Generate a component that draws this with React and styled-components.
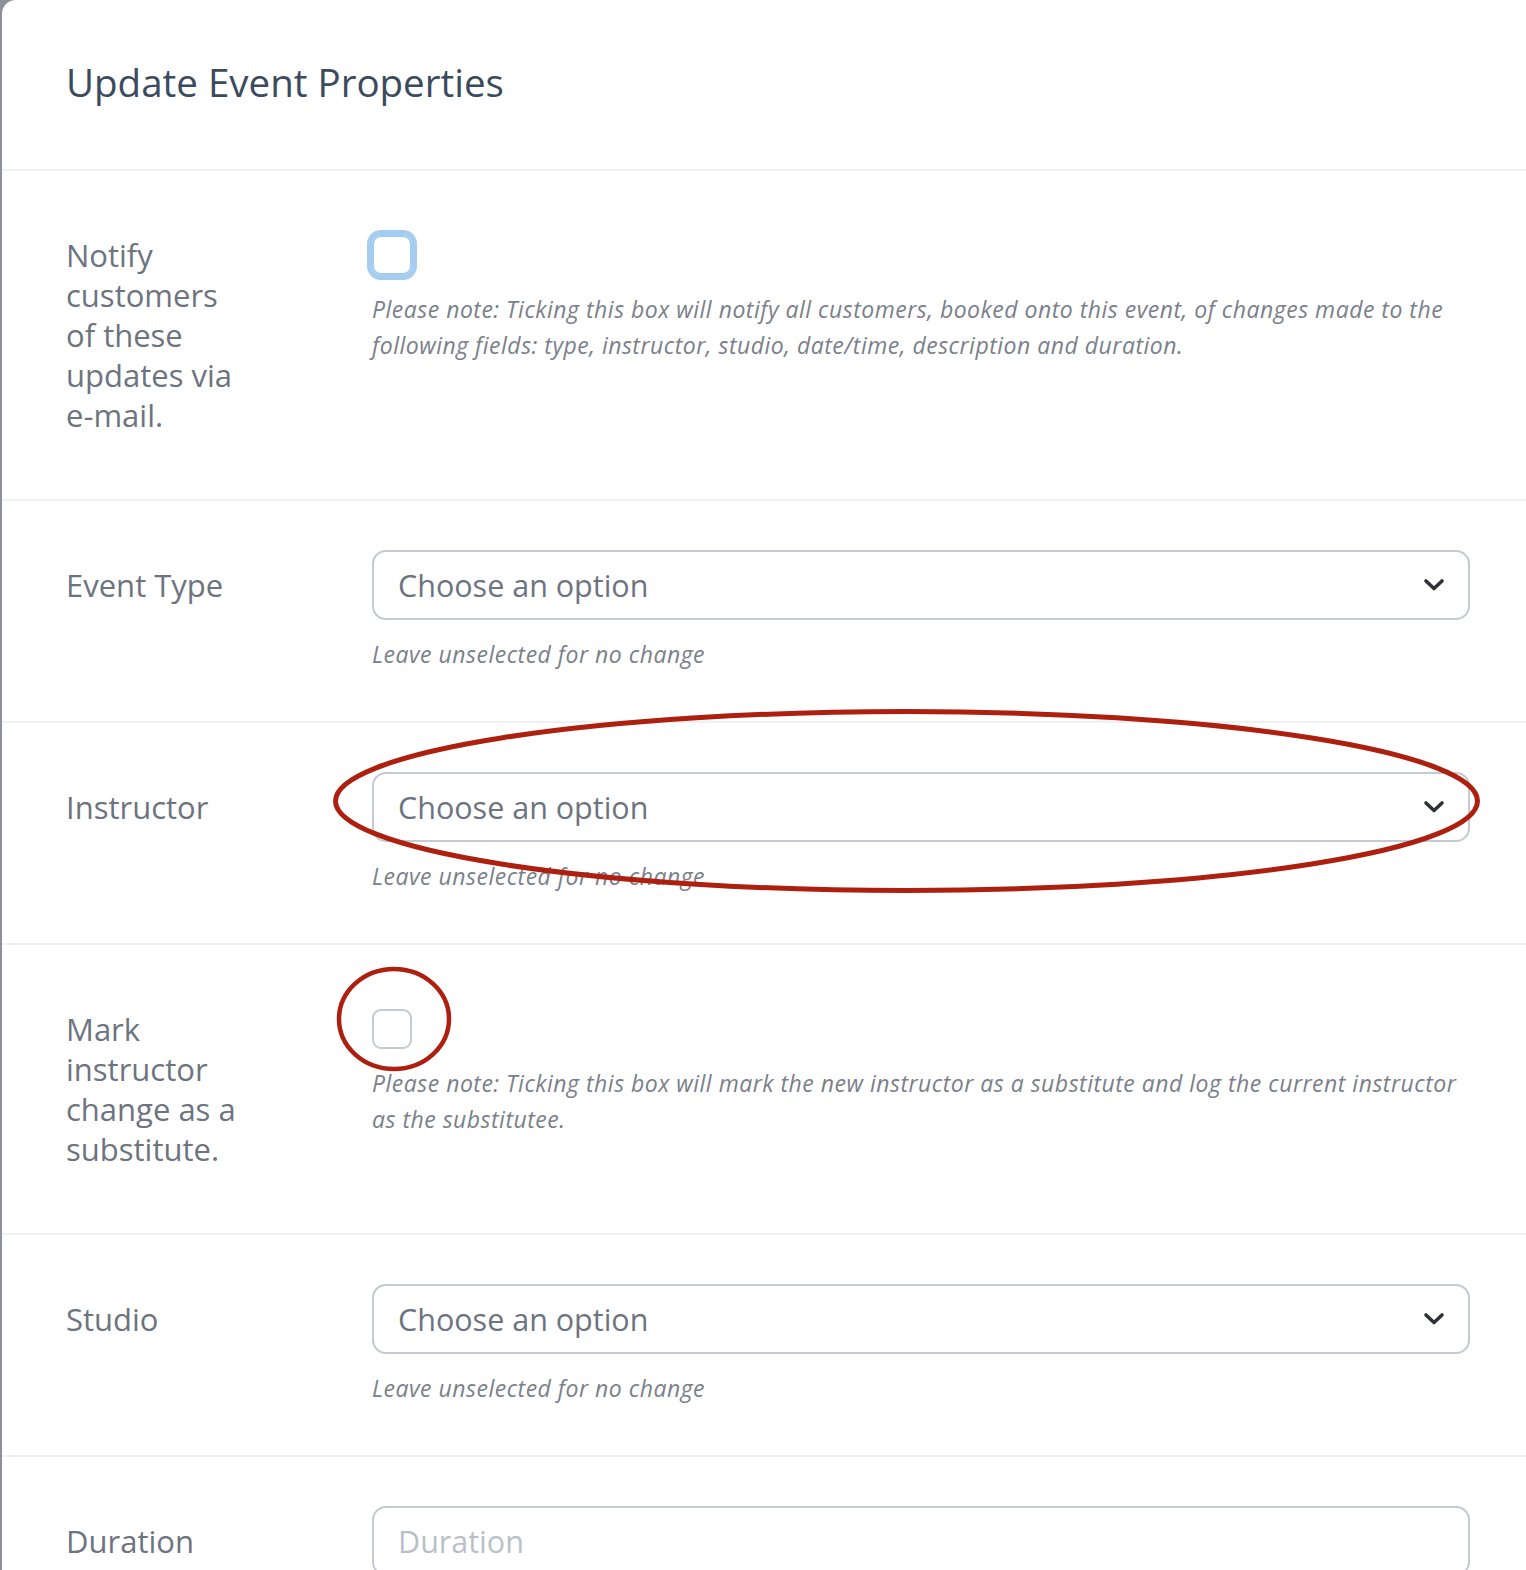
import React from "react";
import styled, { createGlobalStyle } from "styled-components";

const GlobalStyle = createGlobalStyle`
  html, body {
    margin: 0;
    padding: 0;
    background: #8f9199;
  }
  * {
    box-sizing: border-box;
  }
`;

const FONT = `"Open Sans", "Noto Sans", sans-serif`;

const Modal = styled.div`
  position: relative;
  margin-left: 2px;
  min-height: 100vh;
  background: #ffffff;
  border-top-left-radius: 14px;
  overflow: hidden;
  font-family: ${FONT};
`;

const Header = styled.div`
  display: flex;
  align-items: center;
  height: 171px;
  padding: 0 64px 6px;
  border-bottom: 2px solid #eff1f3;
`;

const Title = styled.h1`
  margin: 0;
  font-size: 38.5px;
  font-weight: 400;
  color: #3c4a5e;
`;

const Row = styled.div`
  display: grid;
  grid-template-columns: 306px 1fr;
  padding: 49px 56px 49px 64px;
  border-bottom: 2px solid #eff1f3;
`;

const Label = styled.div`
  max-width: 178px;
  padding: 15px 0;
  font-size: 31px;
  line-height: 40px;
  color: #6d7480;
`;

const Control = styled.div`
  display: flex;
  flex-direction: column;
  align-items: flex-start;
`;

const Checkbox = styled.div`
  width: 40px;
  height: 40px;
  margin-top: 15px;
  border-radius: 9px;
  border: 2px solid ${(p) => (p.$focused ? "#a3cbee" : "#c3cad3")};
  box-shadow: ${(p) => (p.$focused ? "0 0 0 5px #a6cdef" : "none")};
`;

const Help = styled.p`
  margin: 16px 0 0;
  font-size: 23px;
  line-height: 36px;
  letter-spacing: 0.5px;
  font-style: italic;
  color: #7a808a;
`;

const Select = styled.div`
  display: flex;
  align-items: center;
  justify-content: space-between;
  width: 100%;
  height: 70px;
  padding: 0 23px 0 24px;
  border: 2px solid #c3cad3;
  border-radius: 14px;
  font-size: 30.5px;
  color: ${(p) => (p.$placeholder ? "#b9bfc7" : "#6d7480")};
`;

const Overlay = styled.svg`
  position: absolute;
  left: 0;
  top: 0;
  pointer-events: none;
`;

const Chevron = () => (
  <svg width="22" height="14" viewBox="0 0 22 14">
    <path
      d="M3 3 L11 10.5 L19 3"
      fill="none"
      stroke="#2f3237"
      strokeWidth="3.6"
      strokeLinecap="round"
      strokeLinejoin="round"
    />
  </svg>
);

const SelectRow = ({ label }) => (
  <Row>
    <Label>{label}</Label>
    <Control>
      <Select>
        Choose an option
        <Chevron />
      </Select>
      <Help>Leave unselected for no change</Help>
    </Control>
  </Row>
);

const App = () => (
  <>
    <GlobalStyle />
    <Modal>
      <Header>
        <Title>Update Event Properties</Title>
      </Header>

      <Row>
        <Label>Notify customers of these updates via e-mail.</Label>
        <Control>
          <Checkbox $focused />
          <Help>
            Please note: Ticking this box will notify all customers, booked
            onto this event, of changes made to the following fields: type,
            instructor, studio, date/time, description and duration.
          </Help>
        </Control>
      </Row>

      <SelectRow label="Event Type" />
      <SelectRow label="Instructor" />

      <Row>
        <Label>Mark instructor change as a substitute.</Label>
        <Control>
          <Checkbox />
          <Help>
            Please note: Ticking this box will mark the new instructor as a
            substitute and log the current instructor as the substitutee.
          </Help>
        </Control>
      </Row>

      <SelectRow label="Studio" />

      <Row>
        <Label>Duration</Label>
        <Control>
          <Select $placeholder>Duration</Select>
        </Control>
      </Row>

      <Overlay width="1524" height="1570" viewBox="0 0 1524 1570">
        <ellipse
          cx="904.5"
          cy="801"
          rx="571"
          ry="89.5"
          fill="none"
          stroke="#ad1f0e"
          strokeWidth="5"
        />
        <ellipse
          cx="392"
          cy="1019"
          rx="55"
          ry="50"
          fill="none"
          stroke="#ad1f0e"
          strokeWidth="4.5"
        />
      </Overlay>
    </Modal>
  </>
);

export default App;
